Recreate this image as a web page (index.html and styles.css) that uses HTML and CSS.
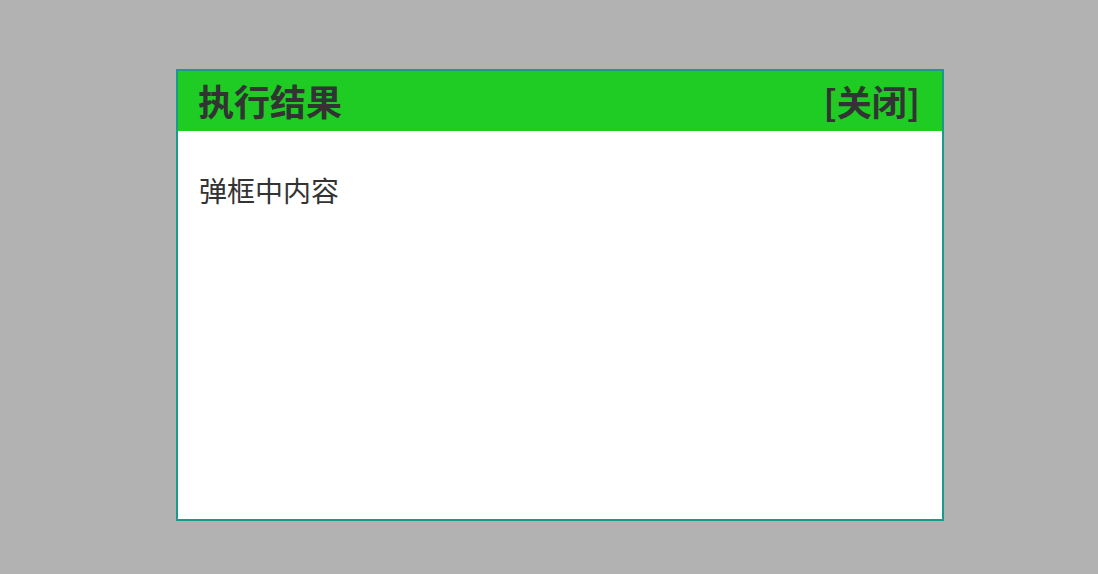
FILE: index.html
```html
<html>
<head>
  <title>执行结果</title>
  <link rel="stylesheet" href="styles.css">
</head>
<body>
  <div class="dialog">
    <div class="dialog-head">
      <h2>执行结果</h2>
      <span class="close">[关闭]</span>
    </div>
    <div class="dialog-body">
      <p>弹框中内容</p>
    </div>
  </div>
</body>
</html>
```

FILE: styles.css
```css
body {
  background: #b2b2b2;
  margin: 0;
  padding: 0;
  font-family: "Noto Sans CJK SC", "Noto Sans", sans-serif;
}
.dialog {
  margin: 69px 0 0 176px;
  width: 764px;
  height: 448px;
  border: 2px solid #1a9a8c;
  background: #fff;
  display: flex;
  flex-direction: column;
}
.dialog-head {
  height: 60px;
  background: #1ecc24;
  display: flex;
  align-items: center;
  justify-content: space-between;
  padding: 0 22px 0 20px;
  color: #333;
}
.dialog-head h2 {
  margin: 0 0 2px 0;
  font-size: 36px;
  font-weight: bold;
}
.close {
  margin-bottom: 2px;
  font-size: 35px;
  font-weight: bold;
  cursor: pointer;
}
.dialog-body {
  padding: 0 21px;
  color: #333;
}
.dialog-body p {
  margin: 39px 0 0 0;
  font-size: 28px;
  line-height: 40px;
}
```
